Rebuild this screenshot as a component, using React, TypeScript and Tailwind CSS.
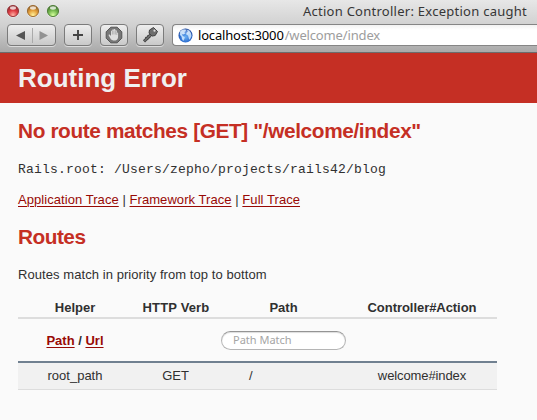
import React from "react";

const btn =
  "flex h-[22px] items-center justify-center rounded-[4px] border border-[#7b7b7b] bg-linear-to-b from-[#eeeeee] to-[#c9c9c9] shadow-[0_1px_0_#dcdcdc]";

function Light({ id, dark, mid, light }: { id: string; dark: string; mid: string; light: string }) {
  return (
    <svg width="14" height="14" viewBox="0 0 14 14">
      <defs>
        <radialGradient id={id} cx="50%" cy="85%" r="75%">
          <stop offset="0" stopColor={light} />
          <stop offset="0.55" stopColor={mid} />
          <stop offset="1" stopColor={dark} />
        </radialGradient>
      </defs>
      <circle cx="7" cy="7.6" r="6" fill="#f2f2f2" />
      <circle cx="7" cy="7" r="5.6" fill={`url(#${id})`} stroke={dark} strokeWidth="0.9" />
      <ellipse cx="7" cy="4" rx="3" ry="1.7" fill="#fff" opacity="0.75" />
    </svg>
  );
}

function Globe() {
  return (
    <svg width="15" height="15" viewBox="0 0 15 15">
      <defs>
        <radialGradient id="globe" cx="50%" cy="60%" r="55%">
          <stop offset="0" stopColor="#69b0f4" />
          <stop offset="0.7" stopColor="#2f6fd0" />
          <stop offset="1" stopColor="#1c489e" />
        </radialGradient>
      </defs>
      <circle cx="7.5" cy="7.5" r="7" fill="url(#globe)" />
      <path d="M2 3.5 4.5 1.6 7.5 1.5 8 3 6.5 4 7 5.5 5.5 6.5 4 6.2 4.8 8 6.8 9 6.4 11 5.2 13 4 11 3.6 8.8 1.8 6.8ZM9 2l2 .4 2 2.6.5 3-1.3 2.8-1 1-.6-2.4-.6-1.8-1.7-.8.2-2 1.3-1Z" fill="#d6ecff" opacity="0.85" />
      <ellipse cx="7.5" cy="3.5" rx="4.8" ry="2.6" fill="#fff" opacity="0.22" />
    </svg>
  );
}

function Toolbar() {
  return (
    <header className="h-[53px] border-b border-[#6c6c6c] bg-linear-to-b from-[#e7e7e7] via-[#d0d0d0] to-[#a9a9a9] font-['Noto_Sans','Open_Sans',sans-serif]">
      <div className="flex h-6 items-start justify-between pl-[6px] pr-[10px]">
        <div className="flex gap-[6px] pt-1">
          <Light id="red" dark="#923136" mid="#df3c43" light="#ffb0a4" />
          <Light id="amber" dark="#99662b" mid="#e5a03a" light="#fff19a" />
          <Light id="green" dark="#4b7b34" mid="#76b950" light="#d4ff9c" />
        </div>
        <div className="whitespace-nowrap text-[13px] leading-[23px] tracking-[0.26px] text-[#363636]">Action Controller: Exception caught</div>
      </div>
      <div className="flex pl-[7px]">
        <div className={`${btn} w-[49px]`}>
          <svg width="47" height="20" viewBox="0 0 47 20">
            <path d="M8 10.5 17 6v9Z" fill="#555" />
            <path d="M24.5 3v15" stroke="#aaa" />
            <path d="M40 10.5 31.500 6v9Z" fill="#929292" />
          </svg>
        </div>
        <div className={`${btn} ml-2 w-7`}>
          <svg width="14" height="14" viewBox="0 0 14 14">
            <path d="M7 2v10M2 7h10" stroke="#444" strokeWidth="1.9" />
          </svg>
        </div>
        <div className={`${btn} ml-2 w-7`}>
          <svg width="18" height="18" viewBox="0 0 18 18">
            <path d="M5.800 1.200h6.400l4.600 4.600v6.400l-4.600 4.600H5.800l-4.600-4.600V5.800Z" fill="#777" stroke="#555" />
            <path d="M6 13.500 3.700 9.500c-.4-.9.6-1.500 1.200-.8L6 10V5.200c0-1 1.300-1 1.300 0V4c0-1.100 1.500-1.100 1.500 0v-.2c0-1.100 1.600-1.100 1.600.2V5c0-1 1.400-1 1.400.1V7c.2-.8 1.300-.7 1.300.2v3.300c0 2-1 3.700-2.600 4H8.200Z" fill="#dedede" />
            <path d="M7.400 5v3.500M8.900 4.500v4M10.400 5v3.500M11.800 6.500v2.500" stroke="#8b8b8b" strokeWidth=".5" />
          </svg>
        </div>
        <div className={`${btn} ml-2 w-7`}>
          <svg width="18" height="18" viewBox="0 0 18 18">
            <path d="M10.500 8 3 15.400" stroke="#444" strokeWidth="3" />
            <path d="m4.500 11 2.500 2.800M6.500 9.300l2.500 2.500" stroke="#444" strokeWidth="1.700" />
            <path d="M10.500 8 3.500 14.900" stroke="#777" strokeWidth="1.200" />
            <path d="m8.500 4 4-2.500 4 4-2.300 4-3.200.6L8 7.200Z" fill="#6d6d6d" stroke="#404040" />
            <circle cx="13.500" cy="4.700" r="1.100" fill="#ddd" />
          </svg>
        </div>
        <div className="ml-2 flex h-[22px] flex-1 items-center rounded-l-[4px] border border-r-0 border-[#858585] bg-linear-to-b from-[#f2f2f2] to-white to-25% pl-[5px]">
          <Globe />
          <span className="ml-[5px] whitespace-nowrap text-[13px] leading-5 tracking-[-0.18px] text-black">localhost:3000</span>
          <span className="ml-px whitespace-nowrap text-[13px] leading-5 tracking-[-0.15px] text-[#9d9d9d]">/welcome/index</span>
        </div>
      </div>
    </header>
  );
}

function Link({ children }: { children: React.ReactNode }) {
  return <a className="text-[#980905] underline decoration-1 underline-offset-2">{children}</a>;
}

export default function App() {
  return (
    <div className="h-[420px] w-[537px] overflow-hidden bg-[#fafafa] font-['Liberation_Sans',Arial,sans-serif] text-[13px] text-[#303030]">
      <Toolbar />
      <div className="h-[50px] bg-[#c52f24] pl-[18px]">
        <h1 className="whitespace-nowrap text-[26px] font-bold leading-[50px] text-[#f0f0f0]">Routing Error</h1>
      </div>
      <main className="pl-[18px]">
        <h2 className="mt-4 whitespace-nowrap text-[20.8px] font-bold leading-6 tracking-[-0.37px] text-[#c52f24]">No route matches [GET] "/welcome/index"</h2>
        <pre className="mt-[17px] font-['Liberation_Mono',monospace] text-[13px] leading-[19px] tracking-[0.2px]">Rails.root: /Users/zepho/projects/rails42/blog</pre>
        <p className="mt-3 whitespace-nowrap leading-[18px] tracking-[0.06px]">
          <Link>Application Trace</Link> | <Link>Framework Trace</Link> | <Link>Full Trace</Link>
        </p>
        <h2 className="mt-4 text-[20.8px] font-bold leading-6 tracking-[-0.5px] text-[#c52f24]">Routes</h2>
        <p className="mt-[17px] leading-[18px] tracking-[0.07px]">Routes match in priority from top to bottom</p>
        <table className="mt-[13px] w-[479px] table-fixed border-collapse text-center">
          <colgroup>
            <col className="w-[114px]" />
            <col className="w-[88px]" />
            <col className="w-[127px]" />
            <col className="w-[150px]" />
          </colgroup>
          <thead>
            <tr className="h-[21px] border-b-2 border-[#dddddd] leading-[18px]">
              <th className="pt-0.5">Helper</th>
              <th className="pt-0.5 tracking-[0.15px]">HTTP Verb</th>
              <th className="pt-0.5">Path</th>
              <th className="pt-0.5 tracking-[-0.05px]">Controller#Action</th>
            </tr>
            <tr className="h-11 border-b-2 border-[#708090]">
              <th className="pt-0.5"><Link>Path</Link> / <Link>Url</Link></th>
              <th />
              <th className="p-0">
                <div className="mx-auto flex h-[19px] w-[125px] items-center rounded-full border border-[#b5b5b5] border-t-[#949494] bg-white pl-[11px] font-['Noto_Sans',sans-serif] text-[11px] font-normal text-[#a5a5a5] shadow-[inset_0_1px_1px_#ddd]">Path Match</div>
              </th>
              <th />
            </tr>
          </thead>
          <tbody>
            <tr className="h-[27px] border-b border-[#dddddd] bg-[#f1f1f1]">
              <td>root_path</td>
              <td className="pr-px">GET</td>
              <td className="pl-[29px] text-left">/</td>
              <td className="tracking-[-0.1px]">welcome#index</td>
            </tr>
          </tbody>
        </table>
      </main>
    </div>
  );
}
